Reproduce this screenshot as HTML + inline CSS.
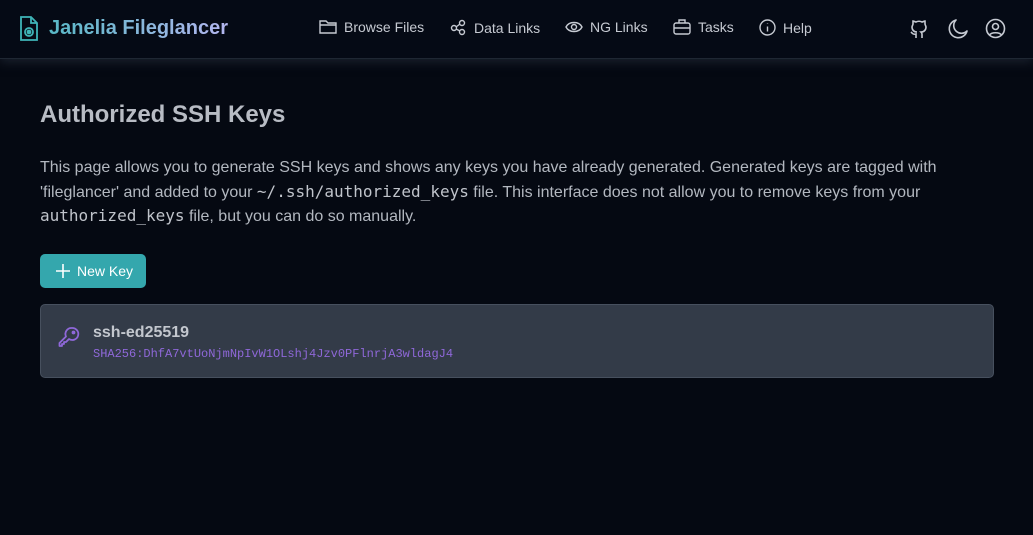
<!DOCTYPE html>
<html><head><style>
body{margin:0;width:1033px;height:535px;background:#050912;font-family:"Liberation Sans",sans-serif;overflow:hidden}
.hdr{height:58px;background:#050a15;border-bottom:1px solid #1f2733;box-shadow:0 3px 10px rgba(40,50,65,.6);position:relative}
.logo{position:absolute;left:19px;top:15px;display:flex;align-items:center}
.logo span{margin-left:10px;font-size:20px;font-weight:bold;background:linear-gradient(90deg,#58b8c6,#b4b6ef);-webkit-background-clip:text;color:transparent}
.nav{position:absolute;top:19px;display:flex;align-items:center;color:#c6cad2;font-size:14px}
.nav svg{margin-right:7px}
.ic{position:absolute;top:18px}
h1{position:absolute;left:40px;top:101px;margin:0;font-size:24px;color:#b8bcc4;font-weight:bold}
p{position:absolute;left:40px;top:156px;margin:0;width:930px;font-size:16px;line-height:24.5px;color:#b3b8c0}
code{font-family:"DejaVu Sans Mono",monospace;font-size:16px;line-height:20px;color:#c0c4cb}
.btn{position:absolute;left:40px;top:254px;width:106px;height:34px;background:#34a7ad;border-radius:5px;color:#fff;font-size:14px;display:flex;align-items:center}
.card{position:absolute;left:40px;top:304px;width:952px;height:72px;background:#333b48;border:1px solid #47505e;border-radius:5px}
.t{position:absolute;left:52px;top:19px;font-size:16px;font-weight:bold;color:#c3c7ce}
.s{position:absolute;left:52px;top:42px;font-family:"Liberation Mono",monospace;font-size:12px;color:#8f68d9}
</style></head><body>
<div class="hdr">
<div class="logo"><svg width="20" height="27" viewBox="0 0 20 27" fill="none" stroke="#3fb5b8" stroke-width="1.8"><path d="M2 2h10l6 6v17H2z"/><path d="M12 2v6h6"/><circle cx="10" cy="17" r="4"/><circle cx="10" cy="17" r="1.5" fill="#3fb5b8"/></svg><span>Janelia Fileglancer</span></div>
<div class="nav" style="left:319px"><svg width="18" height="16" viewBox="0 0 18 16" fill="none" stroke="#c6cad2" stroke-width="1.4"><path d="M1 2h6l2 2h8v10H1z M1 6h16"/></svg>Browse Files</div>
<div class="nav" style="left:450px"><svg width="17" height="17" viewBox="0 0 17 17" fill="none" stroke="#c6cad2" stroke-width="1.4"><circle cx="4" cy="9" r="2.5"/><circle cx="12" cy="4" r="2.5"/><circle cx="12" cy="13" r="2.5"/><path d="M6 8l4-3M6 10l4 2"/></svg>Data Links</div>
<div class="nav" style="left:565px"><svg width="18" height="14" viewBox="0 0 18 14" fill="none" stroke="#c6cad2" stroke-width="1.4"><path d="M1 7c3-6 13-6 16 0c-3 6-13 6-16 0z"/><circle cx="9" cy="7" r="2.5"/></svg>NG Links</div>
<div class="nav" style="left:673px"><svg width="18" height="16" viewBox="0 0 18 16" fill="none" stroke="#c6cad2" stroke-width="1.4"><rect x="1" y="4" width="16" height="11" rx="2"/><path d="M6 4V1h6v3M1 9h16"/></svg>Tasks</div>
<div class="nav" style="left:759px"><svg width="17" height="17" viewBox="0 0 17 17" fill="none" stroke="#c6cad2" stroke-width="1.4"><circle cx="8.5" cy="8.5" r="7.5"/><path d="M8.5 7.5v5M8.5 4.5v.5"/></svg>Help</div>
<svg class="ic" style="left:909px" width="20" height="22" viewBox="0 0 20 22" fill="none" stroke="#c6cad2" stroke-width="1.6"><path d="M7 20v-4c-3 1-4-1-5-2M13 20v-4c0-1-1-2-1-2c3 0 5-2 5-5c0-1-1-2-1-3c0-1 0-2 0-3c-1 0-2 1-3 1c-2-1-4-1-6 0c-1 0-2-1-3-1c0 1 0 2 0 3c0 1-1 2-1 3c0 3 2 5 5 5"/></svg>
<svg class="ic" style="left:947px" width="22" height="22" viewBox="0 0 22 22" fill="none" stroke="#c6cad2" stroke-width="1.6" stroke-linejoin="round"><path d="M9 2a7.5 7.5 0 0 0 11 11a9 9 0 1 1-11-11z"/></svg>
<svg class="ic" style="left:985px" width="21" height="21" viewBox="0 0 21 21" fill="none" stroke="#c6cad2" stroke-width="1.6"><circle cx="10.5" cy="10.5" r="9"/><circle cx="10.5" cy="8.5" r="3"/><path d="M4.5 17c2-3 10-3 12 0"/></svg>
</div>
<h1>Authorized SSH Keys</h1>
<p>This page allows you to generate SSH keys and shows any keys you have already generated. Generated keys are tagged with 'fileglancer' and added to your <code>~/.ssh/authorized_keys</code> file. This interface does not allow you to remove keys from your <code>authorized_keys</code> file, but you can do so manually.</p>
<div class="btn"><svg style="margin:0 6px 0 15px" width="16" height="16" viewBox="0 0 16 16" stroke="#fff" stroke-width="1.6"><path d="M8 1v14M1 8h14"/></svg>New Key</div>
<div class="card"><svg style="position:absolute;left:17px;top:21px" width="22" height="22" viewBox="0 0 22 22" fill="none" stroke="#8f68d9" stroke-width="1.8" stroke-linejoin="round"><path d="M14 2a6 6 0 1 1-3 11l-3 3h-2v2h-2v2h-2.5v-3l6.5-6.5a6 6 0 0 1 6-8.5z"/><circle cx="15.5" cy="6.5" r="1" fill="#8f68d9"/></svg><div class="t">ssh-ed25519</div><div class="s">SHA256:DhfA7vtUoNjmNpIvW1OLshj4Jzv0PFlnrjA3wldagJ4</div></div>
</body></html>
